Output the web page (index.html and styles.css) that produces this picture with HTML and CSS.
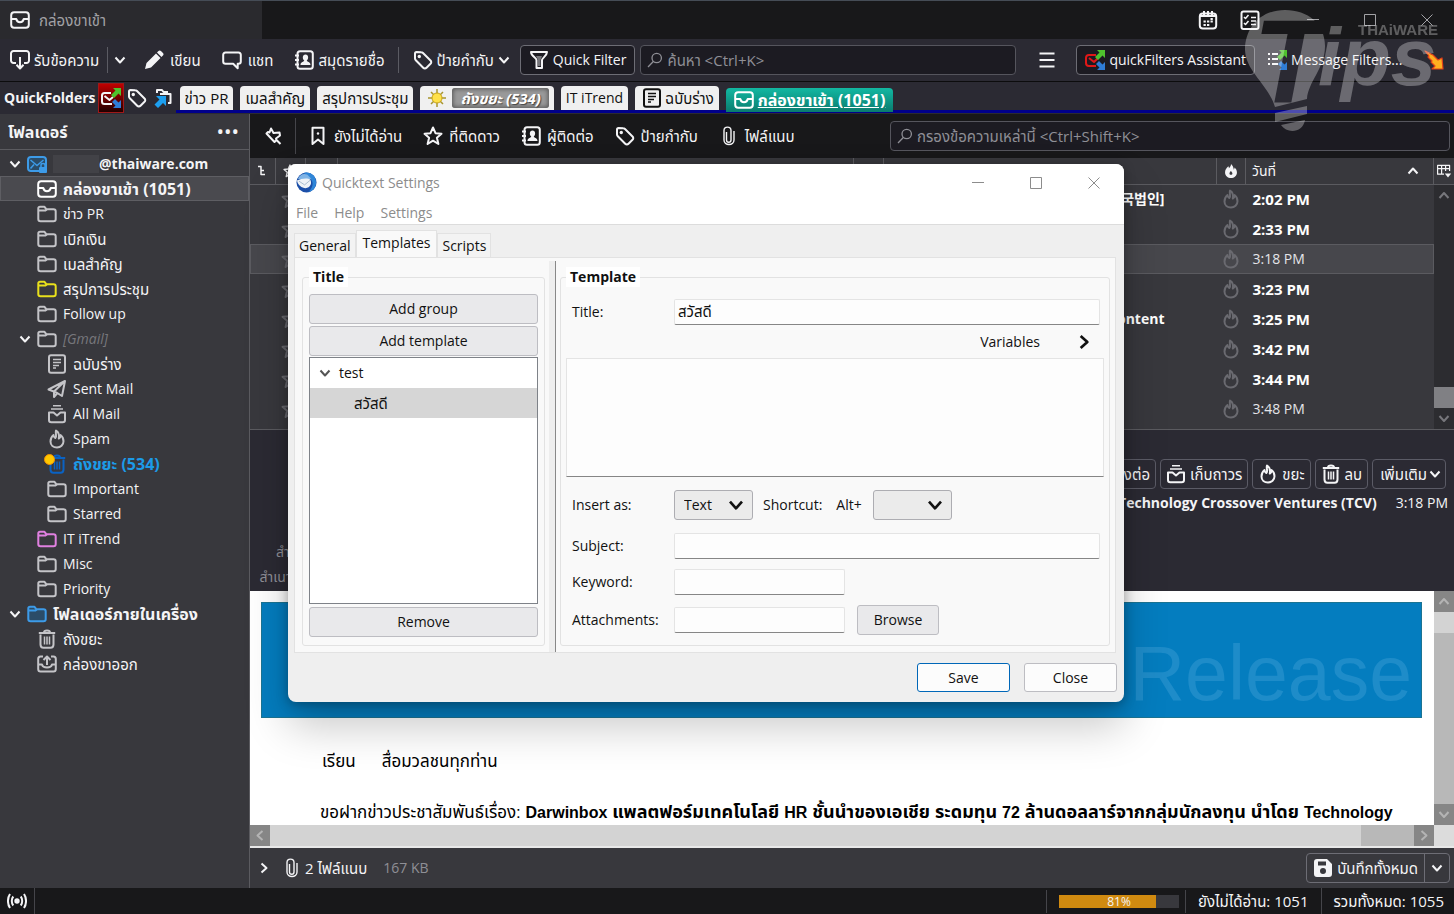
FILE: index.html
```html
<!DOCTYPE html>
<html lang="th">
<head>
    <meta charset="UTF-8">
    <meta name="viewport" content="width=device-width, initial-scale=1.0">
    <title>กล่องขาเข้า</title>
    <link rel="stylesheet" href="styles.css">
</head>
<body>
    <!-- icon set -->
    <svg class="sprite" aria-hidden="true">
        <symbol id="i-inbox" viewBox="0 0 20 20"><rect x="1.2" y="2.2" width="17.6" height="15.6" rx="3"/><path d="M1.5 9h4.800c.4 2.200 1.700 3.200 3.700 3.200s3.300-1 3.700-3.200h4.800"/></symbol>
        <symbol id="i-get" viewBox="0 0 20 20"><path d="M6 13H3.500A2.500 2.500 0 0 1 1 10.500v-7A2.500 2.500 0 0 1 3.500 1h13A2.500 2.500 0 0 1 19 3.500v7a2.500 2.500 0 0 1-2.500 2.500H14M10 7v11M6.500 14.800 10 18.500l3.500-3.700"/></symbol>
        <symbol id="i-pencil" viewBox="0 0 20 20"><path class="solid" d="M1 19l1.500-6L12 3.500l4.500 4.500L7 17.500zM13 2.500l1.200-1.200a2 2 0 0 1 3 0l1.500 1.500a2 2 0 0 1 0 3L17.500 7z"/></symbol>
        <symbol id="i-chat" viewBox="0 0 20 20"><path d="M3.500 2.500h13A2.300 2.300 0 0 1 18.800 5v6.500a2.300 2.300 0 0 1-2.300 2.300h-.8v4.500l-4.500-4.500H3.500a2.300 2.300 0 0 1-2.300-2.300V5a2.300 2.300 0 0 1 2.300-2.500z"/></symbol>
        <symbol id="i-book" viewBox="0 0 20 20"><rect x="3.500" y="1.200" width="15.300" height="17.600" rx="2.500"/><path d="M1 5.500h4M1 10h4M1 14.500h4"/><path class="solid" d="M11.500 4.500c3.300 0 3.300 4.500 1.300 6 0 1.500 3.700 1 3.700 4.500h-10c0-3.500 3.700-3 3.700-4.500-2-1.500-2-6 1.300-6z"/></symbol>
        <symbol id="i-tag" viewBox="0 0 20 20"><path d="M2 3.500v5c0 .8.300 1.300.8 1.800l7.400 7.500c1 1 2.300 1 3.300 0l4-4c1-1 1-2.300 0-3.300L10 3c-.5-.5-1-.8-1.800-.8L3.500 2C2.500 2 2 2.500 2 3.500z"/><circle class="solid" cx="6.300" cy="6.500" r="1.700"/></symbol>
        <symbol id="i-down" viewBox="0 0 12 12"><path d="M1.500 3.500 6 8.500l4.500-5"/></symbol>
        <symbol id="i-up" viewBox="0 0 12 12"><path d="M1.500 8.500 6 3.500l4.500 5"/></symbol>
        <symbol id="i-left" viewBox="0 0 12 12"><path d="M8.500 1.500 3.500 6l5 4.500"/></symbol>
        <symbol id="i-right" viewBox="0 0 12 12"><path d="M3.500 1.500 8.500 6l-5 4.500"/></symbol>
        <symbol id="i-funnel" viewBox="0 0 20 20"><path d="M2 2h16c0 4-5 6-5 8v8H7.500v-8c0-2-5.500-4-5.500-8z"/><path class="dim" d="M7 6h6l-1.500 4v6h-2.500v-6z"/></symbol>
        <symbol id="i-search" viewBox="0 0 16 16"><circle cx="9.700" cy="6" r="4.700"/><path d="M6.300 9.500 1 15"/></symbol>
        <symbol id="i-menu" viewBox="0 0 20 20"><path d="M2.500 3.500h15M2.500 10h15M2.500 16.500h15"/></symbol>
        <symbol id="i-calendar" viewBox="0 0 20 20"><rect x="1.800" y="3.500" width="16.400" height="15" rx="3"/><path d="M2 6h16M6 1v4M10 1v4M14 1v4M5.500 11.500h2.300M9 11.500h2.300M12.500 11.500h2.300M5.500 15h2.300M9 15h2.300M12.500 9h2.300"/></symbol>
        <symbol id="i-tasks" viewBox="0 0 20 20"><rect x="1.500" y="1.500" width="17" height="17.500" rx="2"/><path class="thin" d="M4 7l1.500 1.500L8.500 5M4 13l1.500 1.500L8.500 11M11 7.500h5M11 11h5M11 14.500h5"/></symbol>
        <symbol id="i-folder" viewBox="0 0 20 20"><path d="M1.300 15V4.500c0-1 .6-1.700 1.700-1.700h4.500l2 2.500H16.500c1.300 0 2.200.8 2.200 2v8c0 1.200-.9 2-2.200 2h-13c-1.300 0-2.200-.8-2.200-2.300zM1.500 6.500h7l1.500-1"/></symbol>
        <symbol id="i-note" viewBox="0 0 20 20"><rect x="2" y="1.200" width="16" height="17.600" rx="2"/><path class="thin" d="M6 5.500h8M6 8.500h8M6 11.500h6M6 14h3"/></symbol>
        <symbol id="i-send" viewBox="0 0 20 20"><path d="M1.500 10.500 18 2l-3 15-5.500-3.500zM18 2 7 12.500V18l3-3.500"/></symbol>
        <symbol id="i-archive" viewBox="0 0 20 20"><path d="M2 8.500h4.500l3.500 3 3.500-3H18V16c0 1.500-.8 2.300-2.300 2.300H4.300C2.800 18.300 2 17.500 2 16z"/><path class="thin" d="M4 5h12M6 1.800h8"/></symbol>
        <symbol id="i-fire" viewBox="0 0 20 20"><path d="M9 1.500c-1 3.500 1.300 5.500-.7 7.500C7 8.500 6.500 7.300 6.500 6 4 8 3.500 10.500 3.500 12.500c0 3.800 3 6 6.500 6s6.500-2.500 6.500-6.300c0-2.500-1-4.700-3-6.200 0 2-.5 3-1.700 3.500C12.500 6 11.500 3 9 1.500z"/></symbol>
        <symbol id="i-flame" viewBox="0 0 20 20"><path class="solid" fill-rule="evenodd" d="M10 0c0 3-1 4-3 6 0-1-.3-2-.8-2.700C3 6 1.500 9 1.500 12c0 5 4 8 8.500 8s8.500-3 8.500-8c0-3-1.500-5.500-3.500-7 0 1.500-.3 2.500-1 3.200C13.500 5 12.500 2 10 0zm0 15.500c-1.500 0-2.200-.8-2.200-2 0-1.500 1.200-2.200 2-3.500 1 1.200 2.200 2 2.200 3.500 0 1.200-.6 2-2 2z"/></symbol>
        <symbol id="i-trash" viewBox="0 0 20 20"><path d="M3.500 5.500v10c0 2 1 3.200 3 3.200h7c2 0 3-1.200 3-3.200v-10M1.800 4h16.400M7 3.500C7 .8 13 .8 13 3.500"/><path class="thin" d="M7.500 7.500v8M10 7.500v8M12.500 7.500v8"/></symbol>
        <symbol id="i-outbox" viewBox="0 0 20 20"><path d="M6 2.500H3.500C2 2.500 1.200 3.300 1.200 5v10c0 1.700.8 2.500 2.300 2.500h13c1.500 0 2.300-.8 2.300-2.500V5c0-1.700-.8-2.500-2.300-2.500H14M1.500 10.500H5c.5 2 2.500 3 5 3s4.500-1 5-3h3.500M10 11V3M6.500 6 10 2.500 13.500 6"/></symbol>
        <symbol id="i-mail" viewBox="0 0 20 20"><rect x="1" y="3" width="18" height="14" rx="3" fill="#2b4c68"/><path class="thin" d="M3.500 6 10 11.500 16.500 6M3.500 14.500l3.500-4"/><rect class="solid" x="12" y="13" width="8" height="6" rx="1"/><path class="thin" d="M14 13v-2c0-2 4-2 4 0v2"/></symbol>
        <symbol id="i-pin" viewBox="0 0 20 20"><path d="M8 2.500l2.500 4.500 6-.5.5 3-4 3 .5 1.500-2 2-8-8.500L5 6l1.500.5zM12.500 13l5 5"/></symbol>
        <symbol id="i-bookmark" viewBox="0 0 20 20"><path d="M4.500 1.800h11V18L10 13.500 4.500 18z"/><circle class="solid" cx="10" cy="7.500" r="1.200"/></symbol>
        <symbol id="i-star" viewBox="0 0 20 20"><path d="M10 1.500l2.500 5.700 6 .6-4.600 4 1.500 6.200-5.400-3.300L4.600 18l1.500-6.200-4.600-4 6-.6z"/></symbol>
        <symbol id="i-clip" viewBox="0 0 20 20"><path d="M7.500 6v8c0 3 4.500 3 4.500 0V4.500c0-4.500-7-4.500-7 0V14c0 6 10 6 10 0V5"/></symbol>
        <symbol id="i-save" viewBox="0 0 20 20"><path class="solid" fill-rule="evenodd" d="M4 1h10l5 5v10a3 3 0 0 1-3 3H4a3 3 0 0 1-3-3V4a3 3 0 0 1 3-3zm1 2.500v4h8v-4zM10 10a3 3 0 1 0 0 6 3 3 0 0 0 0-6z"/></symbol>
        <symbol id="i-radio" viewBox="0 0 20 20"><circle class="solid" cx="10" cy="10" r="2.700"/><path d="M6.300 5.500c-2 2.300-2 6.700 0 9M13.700 5.500c2 2.300 2 6.700 0 9M3 3c-2.700 4-2.700 10 0 14M17 3c2.700 4 2.700 10 0 14"/></symbol>
        <symbol id="i-thread" viewBox="0 0 12 12"><path class="thin" d="M2 1.500h3v8h4M5 5.500h3"/></symbol>
        <symbol id="i-picker" viewBox="0 0 20 20"><path class="thin" d="M10 14H2V3h15v7M2 7h15M7 3v11M12 3v7"/><path class="solid" d="M11 13h8l-4 5z"/></symbol>
        <symbol id="i-arrows" viewBox="0 0 20 20"><path fill="#4fc22e" stroke="none" d="M12 0h8v8l-2.500-2.500L13 10l-3-3 4.500-4.500z"/><path fill="#2f7cd6" stroke="none" d="M14 11l3.500 3.500L20 12v8h-8l2.500-2.500L11 14z"/></symbol>
        <symbol id="i-wmin" viewBox="0 0 12 12"><path d="M0 5.500h12"/></symbol>
        <symbol id="i-wmax" viewBox="0 0 12 12"><rect x=".5" y=".5" width="11" height="11"/></symbol>
        <symbol id="i-wclose" viewBox="0 0 12 12"><path d="M.5.5l11 11M11.500.5l-11 11"/></symbol>
    </svg>

    <header class="titlebar">
        <button class="tab th"><svg class="icon"><use href="#i-inbox"/></svg>กล่องขาเข้า</button>
        <div class="title-actions">
            <button aria-label="ปฏิทิน"><svg class="icon"><use href="#i-calendar"/></svg></button>
            <button aria-label="งาน"><svg class="icon"><use href="#i-tasks"/></svg></button>
        </div>
        <div class="win-controls">
            <button aria-label="Minimize"><svg class="wicon"><use href="#i-wmin"/></svg></button>
            <button aria-label="Maximize"><svg class="wicon"><use href="#i-wmax"/></svg></button>
            <button aria-label="Close window"><svg class="wicon"><use href="#i-wclose"/></svg></button>
        </div>
    </header>

    <nav class="toolbar">
        <button class="tool th get"><svg class="icon"><use href="#i-get"/></svg>รับข้อความ</button>
        <i class="sep"></i>
        <button class="tool more" aria-label="ตัวเลือก"><svg class="chev"><use href="#i-down"/></svg></button>
        <button class="tool th write"><svg class="icon"><use href="#i-pencil"/></svg>เขียน</button>
        <button class="tool th chat"><svg class="icon"><use href="#i-chat"/></svg>แชท</button>
        <button class="tool th book"><svg class="icon"><use href="#i-book"/></svg>สมุดรายชื่อ</button>
        <i class="sep"></i>
        <button class="tool th tags"><svg class="icon"><use href="#i-tag"/></svg>ป้ายกำกับ<svg class="chev"><use href="#i-down"/></svg></button>
        <button class="tool boxed quick"><svg class="icon"><use href="#i-funnel"/></svg>Quick Filter</button>
        <label class="search main-search"><svg class="glass"><use href="#i-search"/></svg><input type="text" placeholder="ค้นหา &lt;Ctrl+K&gt;"></label>
        <button class="tool menu" aria-label="เมนู"><svg class="icon"><use href="#i-menu"/></svg></button>
        <button class="tool boxed assistant">
            <svg class="icon" viewBox="0 0 20 20"><path stroke="#e01818" d="M11 5H4C2 5 1 6 1 8v5c0 2 1 3 3 3h7M4 8l5 4 4-4"/><use href="#i-arrows"/></svg>quickFilters Assistant
        </button>
        <button class="tool filters">
            <svg class="icon" viewBox="0 0 20 20"><path d="M1 4h2M1 9h2M1 14h2M5 4h6M5 9h6M5 14h6"/><use href="#i-arrows"/></svg>Message Filters...
        </button>
        <button class="tool bolt" aria-label="quickFilters">
            <svg class="icon" viewBox="0 0 20 20"><path fill="#ffb020" stroke="#e2401b" stroke-width="1.200" d="M1 1l6 3 2 1 5 5 2-1 2-1 1 11H8l3-3-4-4 1-1-4-4 1-1z"/></svg>
        </button>
    </nav>

    <nav class="quickfolders">
        <strong>QuickFolders</strong>
        <button class="qf-icon red" aria-label="quickFilters">
            <svg class="icon" viewBox="0 0 20 20"><path d="M10 5H3.500C2 5 1 6 1 7.500v6C1 15 2 16 3.500 16H11M3.500 8l5 4L12 9"/><use href="#i-arrows"/></svg>
        </button>
        <button class="qf-icon" aria-label="ป้ายกำกับ"><svg class="icon"><use href="#i-tag"/></svg></button>
        <button class="qf-icon" aria-label="ย้ายโฟลเดอร์">
            <svg class="icon" viewBox="0 0 20 20"><path d="M4 5V2h5l1.500 2H15M7 6h10.500v9H15"/><path fill="#1d9ff0" stroke="none" d="M3 8h10v10l-3-3-5 5-3.500-3.500 5-5z"/></svg>
        </button>
        <div class="qf-tabs th">
            <button>ข่าว PR</button>
            <button>เมลสำคัญ</button>
            <button>สรุปการประชุม</button>
            <button class="sun">
                <svg class="icon" viewBox="0 0 20 20"><path stroke="#a8952e" stroke-width="1.500" d="M10 1v18M1 10h18M4 4l12 12M16 4 4 16"/><circle cx="10" cy="10" r="5" fill="#ffe14a" stroke="#c9a41a" stroke-width="1"/></svg><em>ถังขยะ (534)</em>
            </button>
            <button class="latin">IT iTrend</button>
            <button class="draft"><svg class="icon"><use href="#i-note"/></svg>ฉบับร่าง</button>
            <button class="current"><svg class="icon"><use href="#i-inbox"/></svg><span>กล่องขาเข้า (1051)</span></button>
        </div>
    </nav>

    <div class="workspace">
        <aside class="sidebar">
            <div class="side-head"><strong class="th-bold">โฟลเดอร์</strong><button aria-label="เพิ่มเติม">•••</button></div>
            <ul class="tree">
                <li class="root"><a href="#"><svg class="chev"><use href="#i-down"/></svg><svg class="icon blue"><use href="#i-mail"/></svg><span class="blurred"></span><b>@thaiware.com</b></a></li>
                <li class="selected"><a href="#"><svg class="icon"><use href="#i-inbox"/></svg><b class="th-bold">กล่องขาเข้า (1051)</b></a></li>
                <li><a href="#"><svg class="icon"><use href="#i-folder"/></svg>ข่าว PR</a></li>
                <li class="th"><a href="#"><svg class="icon"><use href="#i-folder"/></svg>เบิกเงิน</a></li>
                <li class="th"><a href="#"><svg class="icon"><use href="#i-folder"/></svg>เมลสำคัญ</a></li>
                <li class="th"><a href="#"><svg class="icon yellow"><use href="#i-folder"/></svg>สรุปการประชุม</a></li>
                <li><a href="#"><svg class="icon"><use href="#i-folder"/></svg>Follow up</a></li>
                <li class="branch"><a href="#"><svg class="chev"><use href="#i-down"/></svg><svg class="icon"><use href="#i-folder"/></svg><em>[Gmail]</em></a></li>
                <li class="deep th"><a href="#"><svg class="icon"><use href="#i-note"/></svg>ฉบับร่าง</a></li>
                <li class="deep"><a href="#"><svg class="icon"><use href="#i-send"/></svg>Sent Mail</a></li>
                <li class="deep"><a href="#"><svg class="icon"><use href="#i-archive"/></svg>All Mail</a></li>
                <li class="deep"><a href="#"><svg class="icon"><use href="#i-fire"/></svg>Spam</a></li>
                <li class="deep unread"><a href="#"><svg class="icon"><use href="#i-trash"/></svg><b class="th-bold">ถังขยะ (534)</b></a></li>
                <li class="deep"><a href="#"><svg class="icon"><use href="#i-folder"/></svg>Important</a></li>
                <li class="deep"><a href="#"><svg class="icon"><use href="#i-folder"/></svg>Starred</a></li>
                <li><a href="#"><svg class="icon pink"><use href="#i-folder"/></svg>IT iTrend</a></li>
                <li><a href="#"><svg class="icon"><use href="#i-folder"/></svg>Misc</a></li>
                <li><a href="#"><svg class="icon"><use href="#i-folder"/></svg>Priority</a></li>
                <li class="root"><a href="#"><svg class="chev"><use href="#i-down"/></svg><svg class="icon blue filled"><use href="#i-folder"/></svg><b class="th-bold">โฟลเดอร์ภายในเครื่อง</b></a></li>
                <li class="th"><a href="#"><svg class="icon"><use href="#i-trash"/></svg>ถังขยะ</a></li>
                <li class="th"><a href="#"><svg class="icon"><use href="#i-outbox"/></svg>กล่องขาออก</a></li>
            </ul>
        </aside>

        <main class="content">
            <div class="filterbar th">
                <button class="pin" aria-label="ปักหมุด"><svg class="icon"><use href="#i-pin"/></svg></button>
                <button><svg class="icon"><use href="#i-bookmark"/></svg>ยังไม่ได้อ่าน</button>
                <button><svg class="icon"><use href="#i-star"/></svg>ที่ติดดาว</button>
                <button><svg class="icon"><use href="#i-book"/></svg>ผู้ติดต่อ</button>
                <button><svg class="icon"><use href="#i-tag"/></svg>ป้ายกำกับ</button>
                <button><svg class="icon clip"><use href="#i-clip"/></svg>ไฟล์แนบ</button>
                <label class="search"><svg class="glass"><use href="#i-search"/></svg><input type="text" placeholder="กรองข้อความเหล่านี้ &lt;Ctrl+Shift+K&gt;"></label>
            </div>

            <div class="list">
                <table>
                    <thead>
                        <tr>
                            <th class="c-thread"><svg class="chev"><use href="#i-thread"/></svg></th>
                            <th class="c-star"><svg class="icon"><use href="#i-star"/></svg></th>
                            <th class="c-clip"><svg class="icon"><use href="#i-clip"/></svg></th>
                            <th class="c-subject"></th>
                            <th class="c-read"></th>
                            <th class="c-from"></th>
                            <th class="c-junk"><svg class="icon"><use href="#i-flame"/></svg></th>
                            <th class="c-date"><div>วันที่<svg class="chev"><use href="#i-up"/></svg></div></th>
                        </tr>
                    </thead>
                    <tbody>
                        <tr class="new"><td></td><td><svg class="icon"><use href="#i-star"/></svg></td><td colspan="4" class="from">국법인]</td><td><svg class="icon"><use href="#i-fire"/></svg></td><td>2:02 PM</td></tr>
                        <tr class="new"><td></td><td><svg class="icon"><use href="#i-star"/></svg></td><td colspan="4"></td><td><svg class="icon"><use href="#i-fire"/></svg></td><td>2:33 PM</td></tr>
                        <tr class="active"><td></td><td><svg class="icon"><use href="#i-star"/></svg></td><td colspan="4"></td><td><svg class="icon"><use href="#i-fire"/></svg></td><td>3:18 PM</td></tr>
                        <tr class="new"><td></td><td><svg class="icon"><use href="#i-star"/></svg></td><td colspan="4"></td><td><svg class="icon"><use href="#i-fire"/></svg></td><td>3:23 PM</td></tr>
                        <tr class="new"><td></td><td><svg class="icon"><use href="#i-star"/></svg></td><td colspan="4" class="from">Content</td><td><svg class="icon"><use href="#i-fire"/></svg></td><td>3:25 PM</td></tr>
                        <tr class="new"><td></td><td><svg class="icon"><use href="#i-star"/></svg></td><td colspan="4"></td><td><svg class="icon"><use href="#i-fire"/></svg></td><td>3:42 PM</td></tr>
                        <tr class="new"><td></td><td><svg class="icon"><use href="#i-star"/></svg></td><td colspan="4"></td><td><svg class="icon"><use href="#i-fire"/></svg></td><td>3:44 PM</td></tr>
                        <tr><td></td><td><svg class="icon"><use href="#i-star"/></svg></td><td colspan="4"></td><td><svg class="icon"><use href="#i-fire"/></svg></td><td>3:48 PM</td></tr>
                    </tbody>
                </table>
                <div class="list-side">
                    <button class="picker" aria-label="เลือกคอลัมน์"><svg class="icon"><use href="#i-picker"/></svg></button>
                    <div class="vscroll dark">
                        <svg class="chev"><use href="#i-up"/></svg>
                        <i class="thumb"></i>
                        <svg class="chev"><use href="#i-down"/></svg>
                    </div>
                </div>
            </div>

            <section class="msg-head">
                <div class="msg-actions th">
                    <button>ส่งต่อ</button>
                    <button><svg class="icon"><use href="#i-archive"/></svg>เก็บถาวร</button>
                    <button><svg class="icon"><use href="#i-fire"/></svg>ขยะ</button>
                    <button><svg class="icon"><use href="#i-trash"/></svg>ลบ</button>
                    <button class="tight">เพิ่มเติม<svg class="chev"><use href="#i-down"/></svg></button>
                </div>
                <div class="msg-subject"><b>Technology Crossover Ventures (TCV)</b><time>3:18 PM</time></div>
                <div class="msg-cc"><span>สำเนา</span><span>สำเนาลับ</span></div>
            </section>

            <section class="msg-body">
                <div class="paper">
                    <div class="banner">Release</div>
                    <p class="greet"><span>เรียน</span><span>สื่อมวลชนทุกท่าน</span></p>
                    <p>ขอฝากข่าวประชาสัมพันธ์เรื่อง: <b><span>Darwinbox</span> แพลตฟอร์มเทคโนโลยี <span>HR</span> ชั้นนำของเอเชีย ระดมทุน <span>72</span> ล้านดอลลาร์จากกลุ่มนักลงทุน นำโดย <span>Technology</span></b></p>
                </div>
                <div class="vscroll light">
                    <svg class="chev"><use href="#i-up"/></svg>
                    <i class="thumb"></i>
                    <svg class="chev"><use href="#i-down"/></svg>
                </div>
                <div class="hscroll">
                    <svg class="chev"><use href="#i-left"/></svg>
                    <i class="thumb"></i>
                    <svg class="chev"><use href="#i-right"/></svg>
                </div>
                <i class="corner"></i>
            </section>

            <footer class="attach">
                <button class="expand" aria-label="แสดงไฟล์แนบ"><svg class="chev"><use href="#i-right"/></svg></button>
                <svg class="icon clip"><use href="#i-clip"/></svg>
                <span class="th">2 ไฟล์แนบ</span>
                <span class="size">167 KB</span>
                <div class="save-all th">
                    <button><svg class="icon"><use href="#i-save"/></svg>บันทึกทั้งหมด</button>
                    <button aria-label="ตัวเลือกการบันทึก"><svg class="chev"><use href="#i-down"/></svg></button>
                </div>
            </footer>
        </main>
    </div>

    <footer class="statusbar">
        <span class="net"><svg class="icon"><use href="#i-radio"/></svg></span>
        <span class="quota"><span class="meter"><i style="width: 81%"></i><b>81%</b></span></span>
        <span class="count th">ยังไม่ได้อ่าน: 1051</span>
        <span class="count total th">รวมทั้งหมด: 1055</span>
    </footer>

    <!-- Quicktext window -->
    <div class="dialog" role="dialog" aria-labelledby="dlg-title">
        <div class="dlg-title">
            <svg class="app" viewBox="0 0 22 22"><circle cx="11" cy="11" r="10.500" fill="#1c4fa8"/><path fill="#2f86d8" d="M8 1c7-2 13 3 13 10 0 5-3 9-8 10 4-4 5-8 4-11S13 4 8 1z"/><path fill="#7fb4e6" d="M2 7c2-4 6-6 10-4l4 4-8 1z"/><path fill="#eef2f6" d="M1 9c4-2 11-3 14-1 2 4 0 8-5 9-4 0-8-3-9-8z"/><path fill="none" stroke="#a9bccf" d="M3 9.500l6 4 6-5"/></svg>
            <span id="dlg-title">Quicktext Settings</span>
            <button aria-label="Minimize"><svg class="wicon"><use href="#i-wmin"/></svg></button>
            <button aria-label="Maximize"><svg class="wicon"><use href="#i-wmax"/></svg></button>
            <button aria-label="Close window"><svg class="wicon"><use href="#i-wclose"/></svg></button>
        </div>
        <div class="dlg-menu"><button>File</button><button>Help</button><button>Settings</button></div>
        <div class="dlg-tabs">
            <button>General</button>
            <button class="on">Templates</button>
            <button>Scripts</button>
        </div>
        <div class="panel">
            <fieldset class="group left">
                <legend>Title</legend>
                <button class="btn">Add group</button>
                <button class="btn">Add template</button>
                <ul class="templates">
                    <li><svg class="chev"><use href="#i-down"/></svg>test</li>
                    <li class="picked th">สวัสดี</li>
                </ul>
                <button class="btn">Remove</button>
            </fieldset>
            <div class="splitter"></div>
            <fieldset class="group right">
                <legend>Template</legend>
                <div class="row">
                    <label for="t-title">Title:</label>
                    <input type="text" id="t-title" class="th" value="สวัสดี">
                </div>
                <button class="variables">Variables<svg class="chev"><use href="#i-right"/></svg></button>
                <textarea aria-label="Template text"></textarea>
                <div class="row insert">
                    <label for="t-as">Insert as:</label>
                    <span class="select"><select id="t-as"><option>Text</option></select><svg class="chev"><use href="#i-down"/></svg></span>
                    <label class="inline" for="t-key">Shortcut: <span>Alt+</span></label>
                    <span class="select"><select id="t-key"><option></option></select><svg class="chev"><use href="#i-down"/></svg></span>
                </div>
                <div class="row">
                    <label for="t-subject">Subject:</label>
                    <input type="text" id="t-subject">
                </div>
                <div class="row">
                    <label for="t-word">Keyword:</label>
                    <input type="text" id="t-word" class="short">
                </div>
                <div class="row last">
                    <label for="t-att">Attachments:</label>
                    <input type="text" id="t-att" class="short">
                    <button class="btn browse">Browse</button>
                </div>
            </fieldset>
        </div>
        <div class="dlg-foot">
            <button class="btn primary">Save</button>
            <button class="btn plain">Close</button>
        </div>
    </div>

    <!-- logo overlay -->
    <svg class="watermark" viewBox="0 0 214 134" aria-hidden="true">
        <mask id="cut">
            <rect width="214" height="134" fill="#fff"/>
            <text x="13" y="103" class="logo-t">T</text>
        </mask>
        <g fill="#fff" opacity=".3">
            <path mask="url(#cut)" d="M45 10C20 10 5 28 5 50c1 22 23 34 30 57l32-8c1-17 18-31 18-53C85 24 68 10 45 10z"/>
            <path d="M35 113l32-7v8l-32 8zM41 125l24-5c-2 13-18 14-24 5z"/>
            <text x="78" y="85" class="logo-ips">ips</text>
            <text x="118" y="35" class="logo-name">THAiWARE</text>
        </g>
    </svg>
</body>
</html>
```
FILE: styles.css
```css
* {
    box-sizing: border-box;
}

body {
    margin: 0;
    min-height: 100vh;
    display: flex;
    flex-direction: column;
    position: relative;
    overflow: hidden;
    font-family: "Open Sans", "Noto Sans", "Noto Sans Thai", "Noto Sans CJK KR", sans-serif;
    font-size: 14px;
    line-height: 20px;
    color: #f4f4f6;
    background: #18181a;
}

button,
input,
select,
textarea {
    font: inherit;
    color: inherit;
}

button {
    display: flex;
    align-items: center;
    padding: 0;
    border: none;
    background: none;
    white-space: nowrap;
    cursor: pointer;
}

ul {
    margin: 0;
    padding: 0;
    list-style: none;
}

/* Thai labels run a little larger than the Latin ones */
.th {
    font-size: 15px;
}

.th-bold {
    font-size: 16px;
}

/* icons */
.sprite {
    position: absolute;
    width: 0;
    height: 0;
}

.icon,
.chev,
.glass,
.wicon {
    flex: none;
    width: 20px;
    height: 20px;
    fill: none;
    stroke: currentColor;
    stroke-width: 2;
    stroke-linejoin: round;
}

.solid {
    fill: currentColor;
    stroke: none;
}

.thin {
    stroke-width: 1.5;
}

.dim {
    fill: #77777c;
    stroke: none;
}

.chev {
    width: 12px;
    height: 12px;
}

.glass {
    width: 16px;
    height: 16px;
    stroke-width: 1.3;
}

.wicon {
    width: 12px;
    height: 12px;
    stroke-width: 1;
}

.clip {
    stroke-width: 1.4;
}

/* title bar */
.titlebar {
    display: flex;
    height: 39px;
    border-top: 1px solid #454c56;
}

.tab {
    width: 262px;
    padding-left: 10px;
    gap: 9px;
    background: #2a2a2e;
    color: #a2a2a6;
}

.tab .icon {
    color: #f4f4f6;
}

.title-actions {
    display: flex;
    gap: 22px;
    margin-left: auto;
    margin-right: 47px;
}

.win-controls {
    display: flex;
    gap: 45px;
    padding-right: 21px;
    color: #a2a2a6;
}

/* main toolbar */
.toolbar {
    display: flex;
    align-items: center;
    height: 43px;
    padding: 0 10px;
    background: #2b2a33;
    border-bottom: 1px solid #0c0c0d;
}

.tool {
    gap: 4px;
    height: 30px;
}

.sep {
    width: 1px;
    height: 26px;
    margin: 0 8px;
    background: #5b5b63;
}

.more {
    width: 12px;
    margin-right: 18px;
    margin-left: -2px;
}

.write,
.chat {
    gap: 6px;
    margin-right: 21px;
}

.book {
    margin-right: 5px;
}

.tags {
    margin-left: 6px;
    margin-right: 10px;
}

.boxed {
    padding: 0 8px;
    border: 1px solid #6d6d75;
    border-radius: 4px;
    background: #1c1b22;
}

.search {
    display: flex;
    align-items: center;
    gap: 4px;
    height: 30px;
    padding: 0 6px;
    border: 1px solid #55555d;
    border-radius: 4px;
    background: #1c1b22;
    color: #8f8f96;
    font-size: 15px;
}

.search input {
    flex: 1;
    min-width: 0;
    padding: 0;
    border: none;
    outline: none;
    background: none;
}

.search input::placeholder {
    color: #8f8f96;
}

.main-search {
    flex: 1;
    max-width: 376px;
    margin-left: 5px;
}

.menu {
    margin: 0 19px 0 21px;
}

.filters {
    margin: 0 auto 0 12px;
}

/* quick folders */
.quickfolders {
    display: flex;
    align-items: center;
    height: 32px;
    background: #2b2a33;
    padding-left: 4px;
    border-bottom: 1px solid #2b2a33;
}

.qf-icon {
    width: 26px;
    height: 30px;
    justify-content: center;
}

.qf-icon.red {
    margin-left: 2px;
    background: linear-gradient(#c00000, #200000);
    border: 1px solid #a01818;
}

.qf-tabs {
    flex: 1;
    display: flex;
    align-items: flex-end;
    gap: 7px;
    height: 31px;
    padding-left: 4px;
    border-bottom: 3px solid #00008b;
}

.qf-tabs button {
    height: 24px;
    padding: 0 5px;
    gap: 5px;
    border-radius: 4px 4px 0 0;
    background: #f0f0f0;
    color: #111;
}

.qf-tabs .latin {
    font-size: 14px;
}

.qf-tabs .sun {
    padding-left: 7px;
}

.sun em {
    padding: 0 8px;
    border-radius: 3px;
    background: #999;
    box-shadow: inset 0 0 4px 1px #555;
    color: #fff;
    font-weight: bold;
    line-height: 20px;
    text-shadow: 1px 1px 1px #444;
}

.qf-tabs .draft {
    gap: 3px;
    padding-left: 7px;
}

.qf-tabs .current {
    margin-bottom: -2px;
    padding: 0 8px;
    gap: 4px;
    background: linear-gradient(#12b8a2, #0a7c6e);
    color: #fff;
    font-size: 16px;
    font-weight: bold;
    text-decoration: underline;
}

/* folder pane */
.workspace {
    flex: 1;
    display: flex;
}

.sidebar {
    width: 250px;
    flex: none;
    background: #38383d;
    border-right: 1px solid #5b5b60;
}

.side-head {
    display: flex;
    align-items: center;
    justify-content: space-between;
    height: 36px;
    padding: 0 10px 0 8px;
    border-bottom: 1px solid #5b5b60;
}

.side-head button {
    font-size: 20px;
}

.tree {
    padding-top: 1px;
}

.tree a {
    display: flex;
    align-items: center;
    gap: 6px;
    height: 25px;
    padding-left: 36px;
    color: #f4f4f6;
    text-decoration: none;
    border: 1px solid transparent;
}

.tree .icon {
    color: #c4c4c8;
}

.tree .root a {
    padding-left: 8px;
}

.tree .branch a {
    padding-left: 18px;
}

.tree .deep a {
    padding-left: 46px;
}

.tree .selected a {
    background: #4a4a4f;
    border-color: #5e5e63;
}

.tree .selected .icon {
    color: #fff;
}

.tree em {
    color: #77777c;
}

.tree .blue {
    color: #3d9be8;
}

.tree .filled {
    fill: #2b4c68;
}

.tree .yellow {
    color: #e8e01c;
}

.tree .pink {
    color: #e080e0;
}

.blurred {
    width: 46px;
    height: 18px;
    margin-right: -6px;
    background: #424247;
}

.tree .unread a {
    position: relative;
    color: #1c9be8;
}

.tree .unread .icon {
    color: #0a62c4;
}

.tree .unread a::before {
    content: "";
    position: absolute;
    left: 43px;
    top: 2px;
    width: 9px;
    height: 9px;
    border-radius: 50%;
    background: #ffc800;
    border: 1px solid #f09000;
}

/* filter bar */
.content {
    flex: 1;
    min-width: 0;
    display: flex;
    flex-direction: column;
}

.filterbar {
    display: flex;
    align-items: center;
    gap: 21px;
    height: 44px;
    padding-right: 4px;
}

.filterbar button {
    gap: 6px;
}

.filterbar .pin {
    width: 46px;
    height: 36px;
    margin-right: -9px;
    padding-left: 13px;
    border-right: 1px solid #45454a;
}

.filterbar .search {
    width: 560px;
    margin-left: auto;
}

/* message list */
.list {
    display: flex;
    align-items: flex-start;
    height: 272px;
    background: #38383d;
    border-bottom: 1px solid #5b5b60;
}

.list table {
    flex: 1;
    width: 100%;
    table-layout: fixed;
    border-collapse: collapse;
}

.list th {
    height: 26px;
    padding: 0;
    font-weight: normal;
    border-right: 1px solid #5b5b60;
    border-bottom: 1px solid #5b5b60;
}

.list td {
    height: 30px;
    padding: 0 7px;
    color: #e4e4e8;
}

.list th svg,
.list td svg {
    display: block;
    margin: 0 auto;
}

.list td svg {
    color: #6a6a70;
}

.c-thread { width: 25px; }
.c-star { width: 30px; }
.c-clip { width: 32px; }
.c-read { width: 30px; }
.c-from { width: 333px; }
.c-junk { width: 29px; }
.c-date { width: 188px; }

.list th .icon {
    width: 14px;
    height: 14px;
}

.list td:nth-child(2) {
    padding: 0 0 0 2px;
}

.list td:nth-child(4) {
    padding: 0;
}

.c-date div {
    display: flex;
    align-items: center;
    justify-content: space-between;
    padding: 0 14px 0 6px;
}

.list .c-date svg {
    margin: 0;
}

.list .from {
    text-align: right;
    padding-right: 52px;
}

.new td {
    font-weight: bold;
    color: #fff;
}

.new td:last-child {
    font-size: 15px;
}

.active {
    background: #47474c;
    outline: 1px solid #5b5b60;
    outline-offset: -1px;
}

.list-side {
    width: 20px;
    align-self: stretch;
    display: flex;
    flex-direction: column;
}

.picker {
    height: 27px;
    border-bottom: 1px solid #5b5b60;
    justify-content: center;
}

.picker .icon {
    width: 16px;
    height: 16px;
}

.vscroll {
    display: flex;
    flex-direction: column;
    align-items: center;
}

.vscroll .chev,
.hscroll .chev {
    width: 20px;
    height: 21px;
    padding: 4px;
}

.vscroll .thumb {
    width: 100%;
    height: 21px;
}

.dark {
    flex: 1;
    background: #2c2c30;
    color: #77777c;
}

.dark .thumb {
    margin-top: auto;
    background: #808084;
}

/* message header */
.msg-head {
    height: 161px;
    padding: 29px 6px 0;
    background: #2b2a33;
}

.msg-actions {
    display: flex;
    justify-content: flex-end;
    gap: 4px;
    padding-right: 2px;
}

.msg-actions button {
    height: 30px;
    gap: 4px;
    padding: 0 5px;
    border: 1px solid #5b5b66;
    border-radius: 4px;
}

.msg-actions .tight {
    gap: 2px;
    padding: 0 4px 0 7px;
}

.msg-subject {
    display: flex;
    justify-content: flex-end;
    gap: 19px;
    padding-top: 4px;
}

.msg-cc {
    display: flex;
    flex-direction: column;
    align-items: flex-end;
    width: 52px;
    gap: 5px;
    padding-top: 29px;
    color: #8f8f96;
    white-space: nowrap;
}

/* message body */
.msg-body {
    flex: 1;
    display: grid;
    grid-template-columns: minmax(0, 1fr) 20px;
    grid-template-rows: minmax(0, 1fr) 21px;
    border-bottom: 2px solid #e8e8e8;
    background: #fff;
    color: #000;
    font-family: "Liberation Sans", "Noto Sans Thai", sans-serif;
    font-size: 17px;
}

.paper {
    overflow: hidden;
    padding: 11px 12px 0 11px;
    white-space: nowrap;
}

.banner {
    height: 116px;
    padding-right: 9px;
    border: 1px solid #1b7493;
    background: #047dbf;
    color: #1e8cc9;
    font-size: 77px;
    line-height: 140px;
    text-align: right;
}

.paper p {
    margin: 0 0 0 59px;
    padding-top: 30px;
}

.paper .greet {
    display: flex;
    gap: 26px;
    margin-left: 61px;
    padding-top: 34px;
}

.paper b {
    font-size: 18px;
}

.paper b span {
    font-size: 16px;
}

.light {
    background: #b8b8b8;
    color: #b4b4b4;
}

.light .chev,
.hscroll .chev {
    background: #868686;
}

.light .thumb {
    margin-bottom: auto;
    background: #d3d3d3;
}

.hscroll {
    display: flex;
    background: #b8b8b8;
    color: #b4b4b4;
}

.hscroll .thumb {
    flex: 1;
    margin-right: 53px;
    background: #d3d3d3;
}

.corner {
    background: #dcdcdc;
}

/* attachments */
.attach {
    display: flex;
    align-items: center;
    height: 40px;
    padding: 0 4px 0 8px;
    background: #38383d;
}

.attach .clip {
    margin: 0 3px 0 12px;
}

.size {
    margin-left: 16px;
    color: #8f8f96;
}

.save-all {
    display: flex;
    height: 30px;
    margin-left: auto;
    border: 1px solid #6d6d75;
    border-radius: 4px;
}

.save-all button {
    gap: 4px;
    padding: 0 6px;
}

.save-all button + button {
    border-left: 1px solid #6d6d75;
}

/* status bar */
.statusbar {
    display: flex;
    align-items: center;
    height: 26px;
    padding: 0 10px 0 7px;
}

.net {
    display: flex;
    align-items: center;
    height: 26px;
    padding-right: 7px;
    margin-right: auto;
    border-right: 1px solid #45454a;
}

.quota {
    padding: 0 6px 0 12px;
    border-left: 1px solid #45454a;
    border-right: 1px solid #45454a;
}

.meter {
    display: grid;
    width: 120px;
    height: 13px;
    margin: 5px 0;
    background: #38383d;
}

.meter i,
.meter b {
    grid-area: 1 / 1;
}

.meter i {
    background: #d08a10;
}

.meter b {
    font-size: 12px;
    font-weight: normal;
    line-height: 13px;
    text-align: center;
}

.count {
    padding: 3px 12px 3px 12px;
}

.total {
    padding-right: 0;
    border-left: 1px solid #45454a;
}

/* settings window */
.dialog {
    position: absolute;
    left: 288px;
    top: 164px;
    width: 836px;
    overflow: hidden;
    border-radius: 8px;
    background: #efefef;
    color: #111;
    box-shadow: 0 24px 44px rgba(0, 0, 0, 0.22), 0 2px 12px rgba(0, 0, 0, 0.3);
}

.dlg-title {
    display: flex;
    align-items: center;
    height: 37px;
    padding: 0 24px 0 8px;
    gap: 46px;
    background: #fff;
    color: #8c8c8c;
}

.app {
    width: 21px;
    height: 21px;
    margin-right: -41px;
}

.dlg-title span {
    margin-right: auto;
}

.dlg-menu {
    display: flex;
    gap: 16px;
    height: 24px;
    padding: 0 8px;
    background: #fff;
    color: #8c8c8c;
    border-bottom: 1px solid #dcdcdc;
}

.dlg-tabs {
    display: flex;
    align-items: flex-end;
    height: 32px;
    padding: 0 6px;
}

.dlg-tabs button {
    height: 24px;
    padding: 0 4px;
    border: 1px solid #e2e2e2;
    border-bottom: none;
    background: #f3f3f3;
}

.dlg-tabs .on {
    height: 27px;
    padding: 0 6px 3px;
    background: #f9f9f9;
}

.panel {
    display: flex;
    margin: 0 8px 0 6px;
    padding: 3px 5px 0 7px;
    border: 1px solid #e2e2e2;
    background: #f9f9f9;
}

.group {
    min-width: 0;
    margin: 6px 0 6px;
    padding: 0 6px 8px;
    border: 1px solid #e2e2e2;
    border-radius: 3px;
}

.group legend {
    padding: 0 4px;
    font-weight: bold;
    line-height: 20px;
    background: #fff;
}

.group.left {
    width: 243px;
}

.group.right {
    flex: 1;
    margin-left: 4px;
    padding: 0 5px;
}

.btn {
    justify-content: center;
    width: 100%;
    height: 30px;
    border: 1px solid #bdbdc2;
    border-radius: 3px;
    background: #e9e9eb;
}

.left .btn + .btn {
    margin-top: 2px;
}

.left legend + .btn {
    margin-top: 7px;
}

.templates {
    height: 247px;
    margin: 1px 0 3px;
    padding: 0;
    border: 1px solid #7e8288;
    background: #fff;
}

.templates li {
    display: flex;
    align-items: center;
    gap: 8px;
    height: 30px;
    padding-left: 9px;
}

.templates .picked {
    padding-left: 44px;
    background: #d6d6d6;
}

.templates .chev {
    color: #555;
}

.splitter {
    width: 7px;
    margin-left: 4px;
    background: #eee;
    border-right: 1px solid #888;
}

.row {
    display: flex;
    align-items: center;
    min-height: 26px;
    margin: 0 4px 10px 6px;
}

.right legend + .row {
    margin: 12px 4px 0 6px;
}

.row label {
    width: 102px;
}

.row .inline {
    display: flex;
    gap: 14px;
    width: 100px;
    margin: 0 10px;
}

.row input {
    flex: 1;
    min-width: 0;
    height: 26px;
    padding: 0 3px;
    border: 1px solid #e4e4e4;
    border-bottom-color: #868686;
    border-radius: 2px;
    background: #fdfdfd;
}

.row .short {
    flex: none;
    width: 171px;
}

.row .browse {
    width: 82px;
    margin-left: 12px;
}

.variables {
    height: 33px;
    gap: 36px;
    margin-left: auto;
    margin-right: 12px;
}

.variables .chev {
    width: 16px;
    height: 16px;
}

.group textarea {
    display: block;
    width: 100%;
    height: 119px;
    margin-bottom: 13px;
    resize: none;
    border: 1px solid #e4e4e4;
    border-bottom-color: #868686;
    background: #fdfdfd;
}

.row.insert {
    margin-bottom: 13px;
}

.row.last {
    margin-bottom: 0;
}

.select {
    display: grid;
    align-items: center;
    justify-items: end;
}

.select > * {
    grid-area: 1 / 1;
}

.select select {
    appearance: none;
    width: 79px;
    height: 30px;
    padding: 0 9px;
    border: 1px solid #adadb2;
    border-radius: 3px;
    background: #ebebeb;
}

.select .chev {
    width: 16px;
    height: 16px;
    margin-right: 9px;
    pointer-events: none;
}

.dlg-foot {
    display: flex;
    justify-content: flex-end;
    gap: 14px;
    padding: 10px 7px 10px;
}

.dlg-foot .btn {
    width: 93px;
    height: 29px;
    background: #fcfcfc;
}

.dlg-foot .primary {
    border-color: #0067b8;
}

/* logo overlay */
.watermark {
    position: absolute;
    top: 0;
    right: 0;
    width: 214px;
    height: 134px;
    pointer-events: none;
}

.logo-t,
.logo-ips {
    font-family: "Liberation Sans", Arial, sans-serif;
    font-weight: bold;
    font-style: italic;
}

.logo-t {
    font-size: 118px;
    fill: #000;
}

.logo-ips {
    font-size: 82px;
}

.logo-name {
    font-family: "Liberation Sans", Arial, sans-serif;
    font-size: 15px;
    font-weight: bold;
}
```
